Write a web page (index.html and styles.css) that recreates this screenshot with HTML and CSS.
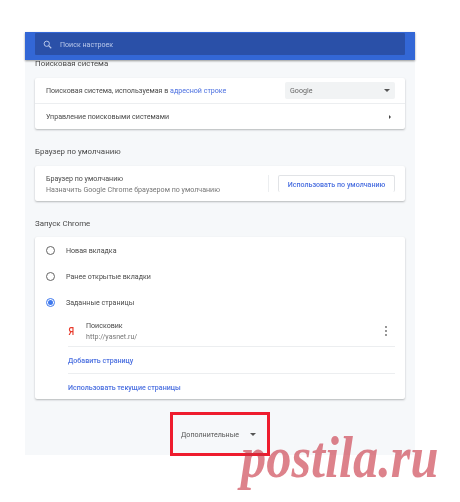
FILE: index.html
```html
<!DOCTYPE html>
<html lang="ru">

<head>
    <meta charset="UTF-8">
    <meta name="viewport" content="width=device-width, initial-scale=1.0">
    <title>Настройки</title>
    <link rel="stylesheet" href="styles.css">
</head>

<body>
    <div class="settings">
        <header class="topbar">
            <div class="search">
                <svg class="search-icon" viewBox="0 0 24 24" width="9" height="9">
                    <circle cx="10" cy="10" r="7" fill="none" stroke="#b9c8ea" stroke-width="2.6" />
                    <path d="M15 15L22 22" stroke="#b9c8ea" stroke-width="3" />
                </svg>
                <span>Поиск настроек</span>
            </div>
        </header>

        <main class="content">
            <h2 class="first">Поисковая система</h2>
            <section class="card">
                <div class="row engine">
                    <span>Поисковая система, используемая в <a>адресной строке</a></span>
                    <div class="select">Google<i class="caret"></i></div>
                </div>
                <div class="row manage">
                    <span>Управление поисковыми системами</span>
                    <i class="arrow"></i>
                </div>
            </section>

            <h2>Браузер по умолчанию</h2>
            <section class="card">
                <div class="row browser">
                    <div class="browser-text">
                        <div>Браузер по умолчанию</div>
                        <div class="muted">Назначить Google Chrome браузером по умолчанию</div>
                    </div>
                    <div class="default-action">
                        <button>Использовать по умолчанию</button>
                    </div>
                </div>
            </section>

            <h2>Запуск Chrome</h2>
            <section class="card startup">
                <label class="radio-row"><i class="radio"></i>Новая вкладка</label>
                <label class="radio-row"><i class="radio"></i>Ранее открытые вкладки</label>
                <label class="radio-row"><i class="radio checked"></i>Заданные страницы</label>
                <div class="pages">
                    <div class="page">
                        <span class="ya">Я</span>
                        <div class="page-text">
                            <div>Поисковик</div>
                            <div class="muted">http://yasnet.ru/</div>
                        </div>
                        <svg class="dots" viewBox="0 0 4 12" width="4" height="12">
                            <circle cx="2" cy="2" r="0.9" fill="#666" />
                            <circle cx="2" cy="6" r="0.9" fill="#666" />
                            <circle cx="2" cy="10" r="0.9" fill="#666" />
                        </svg>
                    </div>
                    <div class="link-row"><a>Добавить страницу</a></div>
                    <div class="link-row"><a>Использовать текущие страницы</a></div>
                </div>
            </section>

            <div class="more">
                <span>Дополнительные</span>
                <i class="caret"></i>
            </div>
        </main>
    </div>

    <!-- red highlight and site watermark sit on top of the shot -->
    <div class="highlight"></div>
    <div class="watermark">postila.ru</div>
</body>

</html>
```

FILE: styles.css
```css
html,
body {
    margin: 0;
    height: 502px;
    overflow: hidden;
    background-color: #fff;
}

body {
    position: relative;
    font-family: Roboto, "Liberation Sans", sans-serif;
    font-size: 7.1px;
    color: #4a4a4a;
}

.settings {
    width: 390px;
    height: 423px;
    margin: 32px 0 0 25px;
    background-color: #f6f8fa;
    filter: blur(0.6px);
}

/* Blue top bar */
.topbar {
    position: relative;
    z-index: 1;
    height: 28px;
    padding: 1px 10px 0;
    box-sizing: border-box;
    background-color: #3367d6;
    box-shadow: 0 1px 2px rgba(0, 0, 0, 0.4);
}

.search {
    display: flex;
    align-items: center;
    height: 22px;
    padding-left: 8px;
    border-radius: 1px;
    background-color: #2a50a8;
    color: #b9c8ea;
}

.search-icon {
    margin-right: 8px;
}

.content {
    padding: 0 10px;
}

h2 {
    margin: 0;
    padding: 17px 0 8px;
    height: 12px;
    line-height: 12px;
    font-size: 7.9px;
    font-weight: 400;
    box-sizing: content-box;
    color: #4a4a4a;
}

h2.first {
    height: 8px;
    line-height: 8px;
    padding: 0 0 10px;
}

.card {
    border-radius: 2px;
    background-color: #fff;
    box-shadow: 0 1px 2px rgba(60, 64, 67, 0.35);
}

.row {
    display: flex;
    align-items: center;
    justify-content: space-between;
    padding: 0 10px 0 11px;
}

.engine {
    height: 25px;
    border-bottom: 1px solid #eceef0;
}

.manage {
    height: 25px;
}

a {
    color: #4a6fe0;
}

.select {
    display: flex;
    align-items: center;
    justify-content: space-between;
    width: 110px;
    height: 17px;
    padding: 0 5px;
    box-sizing: border-box;
    border-radius: 2px;
    background-color: #f1f3f4;
    color: #666;
}

.caret {
    display: block;
    width: 0;
    height: 0;
    border-left: 3px solid transparent;
    border-right: 3px solid transparent;
    border-top: 3px solid #555;
}

.arrow {
    display: block;
    width: 0;
    height: 0;
    margin-right: 4px;
    border-top: 2px solid transparent;
    border-bottom: 2px solid transparent;
    border-left: 2.5px solid #444;
}

.browser {
    height: 35px;
}

.browser-text {
    line-height: 11px;
}

.muted {
    color: #777;
}

.default-action {
    display: flex;
    align-items: center;
    height: 17px;
    padding-left: 9px;
    border-left: 1px solid #eceef0;
}

button {
    width: 117px;
    height: 17px;
    padding: 0;
    border: 1px solid #e1e3e6;
    border-bottom: none;
    border-radius: 2px;
    background-color: #fff;
    font: inherit;
    font-weight: 500;
    color: #4a6fe0;
}

.startup {
    height: 162px;
    margin-top: -1px;
}

.radio-row {
    display: flex;
    align-items: center;
    height: 26px;
    padding-left: 11px;
}

.radio {
    width: 7px;
    height: 7px;
    margin-right: 11px;
    border: 1px solid #666;
    border-radius: 50%;
}

.radio.checked {
    width: 5px;
    height: 5px;
    border: 1px solid #3f79ee;
    padding: 1px;
    background-color: #3f79ee;
    background-clip: content-box;
}

.pages {
    margin: 0 10px 0 33px;
}

.page {
    display: flex;
    align-items: center;
    height: 31px;
    border-bottom: 1px solid #eceef0;
}

.ya {
    width: 18px;
    font-family: "Liberation Sans", sans-serif;
    font-size: 11px;
    font-weight: 700;
    color: #e8392b;
    transform: scaleX(0.7);
    transform-origin: 2px 50%;
}

.page-text {
    flex: 1;
    line-height: 11px;
}

.dots {
    margin-right: 7px;
}

.link-row {
    display: flex;
    align-items: center;
    height: 26px;
    font-weight: 500;
    border-bottom: 1px solid #eceef0;
}

.link-row:last-child {
    border-bottom: none;
}

.more {
    display: flex;
    align-items: center;
    justify-content: center;
    gap: 11px;
    margin-top: 27px;
    height: 16px;
    padding-right: 3px;
    color: #555;
}

/* Overlays */
.highlight {
    position: absolute;
    left: 170px;
    top: 412px;
    width: 100px;
    height: 44px;
    box-sizing: border-box;
    border: 3px solid #ee1c2e;
}

.watermark {
    position: absolute;
    left: 241px;
    top: 424px;
    font-family: "Liberation Serif", serif;
    font-style: italic;
    font-weight: 700;
    font-size: 60px;
    line-height: 66px;
    color: #c8303f;
    opacity: 0.6;
    transform: scaleX(0.84);
    transform-origin: left center;
}
```
